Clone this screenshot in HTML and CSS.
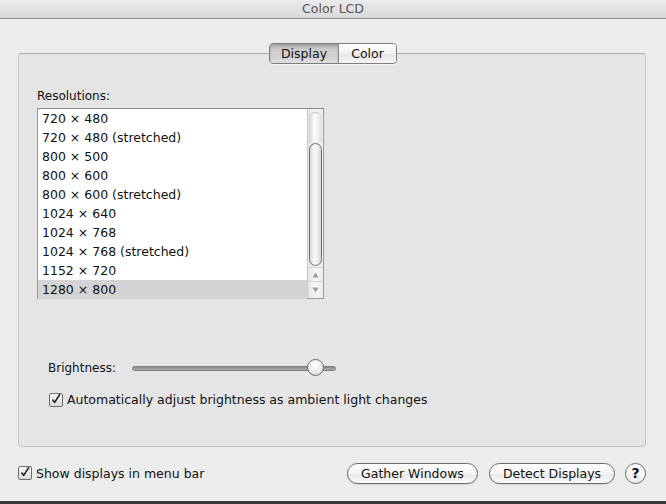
FILE: index.html
```html
<!DOCTYPE html>
<html>
<head>
<meta charset="utf-8">
<link rel="stylesheet" href="styles.css">
</head>
<body>
<div class="window">
  <div class="titlebar">Color LCD</div>
  <div class="content">
    <div class="tabs">
      <div class="seg">
        <span class="seg-item active">Display</span><span class="seg-item">Color</span>
      </div>
    </div>
    <div class="group">
      <div class="label">Resolutions:</div>
      <div class="listbox">
        <ul class="rows">
          <li>720 × 480</li>
          <li>720 × 480 (stretched)</li>
          <li>800 × 500</li>
          <li>800 × 600</li>
          <li>800 × 600 (stretched)</li>
          <li>1024 × 640</li>
          <li>1024 × 768</li>
          <li>1024 × 768 (stretched)</li>
          <li>1152 × 720</li>
          <li class="selected">1280 × 800</li>
        </ul>
        <div class="scrollbar">
          <div class="cap"></div>
          <div class="thumb"></div>
          <div class="track"></div>
          <div class="arrow up"><svg width="7" height="6" viewBox="0 0 7 6"><path d="M3.5 0.5 L6.5 5.5 L0.5 5.5 Z" fill="#9a9a9a"/></svg></div>
          <div class="arrow down"><svg width="7" height="6" viewBox="0 0 7 6"><path d="M0.5 0.5 L6.5 0.5 L3.5 5.5 Z" fill="#9a9a9a"/></svg></div>
        </div>
      </div>
      <div class="brightness">
        <span class="blabel">Brightness:</span>
        <div class="slider">
          <div class="strack"></div>
          <div class="knob"></div>
        </div>
      </div>
      <label class="check auto">
        <span class="box"><svg width="14" height="14" viewBox="0 0 14 14"><path d="M3 7.5 L5.5 11 L11.5 1.5" fill="none" stroke="#222" stroke-width="1.8" stroke-linejoin="round"/></svg></span>
        <span>Automatically adjust brightness as ambient light changes</span>
      </label>
    </div>
    <div class="footer">
      <label class="check">
        <span class="box"><svg width="14" height="14" viewBox="0 0 14 14"><path d="M3 7.5 L5.5 11 L11.5 1.5" fill="none" stroke="#222" stroke-width="1.8" stroke-linejoin="round"/></svg></span>
        <span>Show displays in menu bar</span>
      </label>
      <div class="buttons">
        <span class="btn gather">Gather Windows</span>
        <span class="btn detect">Detect Displays</span>
        <span class="help">?</span>
      </div>
    </div>
  </div>
  <div class="bottomline"></div>
</div>
</body>
</html>
```
FILE: styles.css
```css
* { box-sizing: border-box; }
html, body { margin: 0; padding: 0; }
body {
  width: 666px;
  height: 504px;
  overflow: hidden;
  background: #ececec;
  font-family: "DejaVu Sans", "Liberation Sans", sans-serif;
  font-size: 12px;
  color: #111;
}
.window {
  width: 666px;
  height: 504px;
  display: flex;
  flex-direction: column;
}
.titlebar {
  height: 19px;
  background: linear-gradient(#ebebeb, #d9d9d9);
  border-bottom: 1px solid #8e8e8e;
  text-align: center;
  line-height: 18px;
  font-size: 12.5px;
  color: #555;
}
.content {
  flex: 1;
  display: flex;
  flex-direction: column;
  padding: 24px 20px 0 18px;
}
.tabs {
  display: flex;
  justify-content: center;
  height: 21px;
  margin-bottom: -11px;
  position: relative;
  z-index: 2;
  padding-left: 2px;
}
.seg {
  display: flex;
  height: 21px;
  border: 1px solid #7d7d7d;
  border-radius: 4px;
  overflow: hidden;
  box-shadow: 0 1px 0 rgba(255,255,255,0.6);
}
.seg-item {
  display: flex;
  align-items: center;
  justify-content: center;
  font-size: 12.5px;
  background: linear-gradient(#ffffff, #f1f1f1 50%, #e6e6e6 51%, #f4f4f4);
  color: #111;
}
.seg-item.active {
  width: 69px;
  background: linear-gradient(#bdbdbd, #d4d4d4 50%, #cacaca 51%, #dedede);
  border-right: 1px solid #8a8a8a;
  box-shadow: inset 0 2px 3px rgba(0,0,0,0.18);
}
.seg-item:not(.active) { width: 57px; }
.group {
  height: 394px;
  background: #e5e5e5;
  border: 1px solid #c6c6c6;
  border-top-color: #a9a9a9;
  border-radius: 4px;
  padding: 30px 0 0 18px;
}
.label {
  height: 20px;
  line-height: 17px;
  padding-top: 4px;
}
.listbox {
  margin-top: 4px;
  width: 287px;
  height: 191px;
  border: 1px solid #9b9b9b;
  border-top-color: #8a8a8a;
  background: #fff;
  display: flex;
}
.rows {
  list-style: none;
  margin: 0;
  padding: 0;
  flex: 1;
}
.rows li {
  height: 19px;
  line-height: 19px;
  padding-left: 4px;
  font-size: 12.5px;
  white-space: nowrap;
}
.rows li.selected { background: #d4d4d4; }
.scrollbar {
  width: 16px;
  border-left: 1px solid #c8c8c8;
  background: linear-gradient(90deg, #e4e4e4, #f7f7f7 45%, #eeeeee);
  display: flex;
  flex-direction: column;
}
.cap {
  height: 31px;
  margin: 3px 1px 0 1px;
  border-radius: 7px 7px 0 0;
  background: linear-gradient(90deg, #d4d4d4, #ffffff 45%, #dedede);
  border-top: 1px solid #c4c4c4;
}
.thumb {
  height: 123px;
  margin: 0 1px;
  border: 1px solid #6f6f6f;
  border-radius: 7px;
  background: linear-gradient(90deg, #d6d6d6, #fafafa 40%, #f3f3f3 60%, #d8d8d8);
}
.track { flex: 1; }
.arrow {
  height: 14px;
  display: flex;
  align-items: center;
  justify-content: center;
  border-top: 1px solid #d4d4d4;
}
.arrow.down { height: 17px; }
.brightness {
  display: flex;
  align-items: center;
  margin-top: 60px;
  padding-left: 11px;
  height: 18px;
}
.blabel { width: 84px; }
.slider {
  position: relative;
  width: 204px;
  height: 18px;
  display: flex;
  align-items: center;
}
.strack {
  width: 100%;
  height: 5px;
  border-radius: 3px;
  background: linear-gradient(#8a8a8a, #b0b0b0);
  border: 1px solid #7c7c7c;
}
.knob {
  position: absolute;
  left: 175px;
  top: 0;
  width: 17px;
  height: 17px;
  border-radius: 50%;
  border: 1px solid #6c6c6c;
  background: radial-gradient(circle at 50% 30%, #ffffff, #f0f0f0 45%, #cfcfcf 100%);
}
.check {
  display: flex;
  align-items: center;
  gap: 4px;
}
.box {
  width: 14px;
  height: 14px;
  border: 1px solid #6e6e6e;
  border-radius: 2px;
  background: linear-gradient(#f5f5f5, #dcdcdc);
  display: flex;
  overflow: visible;
}
.box svg { margin: -2px 0 0 0; }
.auto {
  margin-top: 15px;
  padding-left: 12px;
  font-size: 12.5px;
}
.footer {
  display: flex;
  align-items: center;
  justify-content: space-between;
  margin-top: 15px;
  height: 22px;
}
.footer .check { font-size: 12.5px; }
.buttons {
  display: flex;
  align-items: center;
  gap: 11px;
}
.btn {
  height: 21px;
  border: 1px solid #6d6d6d;
  border-radius: 11px;
  background: linear-gradient(#ffffff, #f4f4f4 50%, #e8e8e8 51%, #fafafa);
  display: flex;
  align-items: center;
  justify-content: center;
  font-size: 12.5px;
  box-shadow: 0 1px 1px rgba(0,0,0,0.1);
}
.gather { width: 131px; }
.detect { width: 126px; }
.help {
  width: 21px;
  height: 21px;
  border-radius: 50%;
  border: 1px solid #6d6d6d;
  background: linear-gradient(#ffffff, #ececec);
  display: flex;
  align-items: center;
  justify-content: center;
  font-weight: bold;
  font-size: 14px;
  margin-left: -1px;
}
.bottomline {
  height: 3px;
  background: #3a3a3a;
}
```
